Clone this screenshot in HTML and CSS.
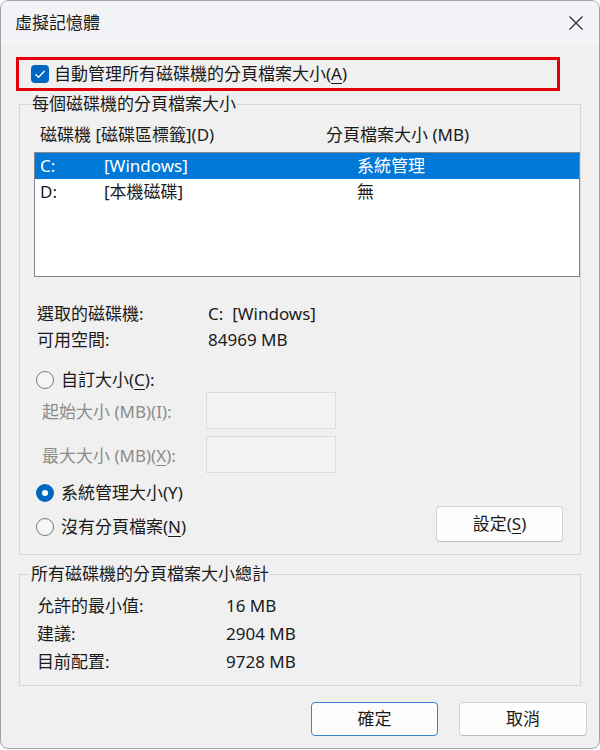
FILE: index.html
```html
<!DOCTYPE html>
<html lang="zh-Hant">
<head>
    <meta charset="utf-8">
    <title>虛擬記憶體</title>
    <link rel="stylesheet" href="styles.css">
</head>
<body>
    <div class="dialog">
        <div class="titlebar">
            <span class="title">虛擬記憶體</span>
            <svg class="close" width="16" height="16" viewBox="0 0 16 16">
                <path d="M1.5 1.5 L14.5 14.5 M14.5 1.5 L1.5 14.5" stroke="#262626" stroke-width="1.1" fill="none"/>
            </svg>
        </div>

        <div class="auto-manage">
            <span class="checkbox">
                <svg width="18" height="18" viewBox="0 0 18 18">
                    <path d="M4.5 9.3 L7.6 12.3 L13.6 6" stroke="#fff" stroke-width="1.4" fill="none"/>
                </svg>
            </span>
            <span>自動管理所有磁碟機的分頁檔案大小(<u>A</u>)</span>
        </div>

        <fieldset class="group drives">
            <legend>每個磁碟機的分頁檔案大小</legend>

            <div class="list-head">
                <span>磁碟機 [磁碟區標籤](D)</span>
                <span>分頁檔案大小 (MB)</span>
            </div>
            <div class="drive-list">
                <div class="drive-row selected">
                    <span>C:</span><span>[Windows]</span><span>系統管理</span>
                </div>
                <div class="drive-row">
                    <span>D:</span><span>[本機磁碟]</span><span>無</span>
                </div>
            </div>

            <div class="info">
                <div class="info-row"><span>選取的磁碟機:</span><span>C:&nbsp;&nbsp;[Windows]</span></div>
                <div class="info-row"><span>可用空間:</span><span>84969 MB</span></div>
            </div>

            <div class="radio-row custom"><span class="radio"></span><span>自訂大小(<u>C</u>):</span></div>
            <div class="size-row">
                <span class="size-label">起始大小 (MB)(I):</span>
                <span class="size-input"></span>
            </div>
            <div class="size-row second">
                <span class="size-label">最大大小 (MB)(<u>X</u>):</span>
                <span class="size-input"></span>
            </div>
            <div class="radio-row system"><span class="radio on"></span><span>系統管理大小(Y)</span></div>
            <div class="last-row">
                <div class="radio-row none"><span class="radio"></span><span>沒有分頁檔案(<u>N</u>)</span></div>
                <button class="btn set">設定(<u>S</u>)</button>
            </div>
        </fieldset>

        <fieldset class="group totals">
            <legend>所有磁碟機的分頁檔案大小總計</legend>
            <div class="total-row"><span>允許的最小值:</span><span>16 MB</span></div>
            <div class="total-row"><span>建議:</span><span>2904 MB</span></div>
            <div class="total-row"><span>目前配置:</span><span>9728 MB</span></div>
        </fieldset>

        <div class="actions">
            <button class="btn default">確定</button>
            <button class="btn">取消</button>
        </div>
    </div>
</body>
</html>
```

FILE: styles.css
```css
body {
    margin: 0;
    background: #ffffff;
    font-family: "Noto Sans", "Noto Sans CJK TC", sans-serif;
    font-size: 17px;
    color: #1b1b1b;
}

u {
    text-decoration-thickness: 1px;
    text-underline-offset: 3px;
}

.dialog {
    width: 600px;
    height: 749px;
    box-sizing: border-box;
    border: 1px solid #a3a3a3;
    border-radius: 8px;
    background: #f0f0f0;
    overflow: hidden;
    display: flex;
    flex-direction: column;
}

/* title bar */
.titlebar {
    height: 44px;
    flex: none;
    display: flex;
    align-items: center;
    justify-content: space-between;
    padding: 0 15px 0 14px;
    background: #f2f3f6;
}

.title {
    line-height: 24px;
}

.close {
    display: block;
}

/* auto manage checkbox, outlined in red */
.auto-manage {
    margin: 12px 0 0 15px;
    width: 544px;
    height: 34px;
    box-sizing: border-box;
    border: 3px solid #e3000b;
    display: flex;
    align-items: center;
    gap: 5px;
    padding-left: 12px;
    line-height: 24px;
}

.checkbox {
    width: 18px;
    height: 18px;
    border-radius: 4px;
    background: #0067c0;
    flex: none;
}

.checkbox svg {
    display: block;
}

/* group boxes */
.group {
    margin: 2px 18px 0 18px;
    padding: 0;
    border: 1px solid #d7d7d7;
    min-inline-size: 0;
}

.group legend {
    margin-left: 11px;
    padding: 0 1px;
    line-height: 22px;
}

.list-head {
    margin-top: 8px;
    height: 24px;
    line-height: 24px;
    display: grid;
    grid-template-columns: 286px 1fr;
    padding-left: 20px;
}

.drive-list {
    margin: 5px 0 0 14px;
    height: 125px;
    box-sizing: border-box;
    border: 1px solid #828790;
    background: #ffffff;
}

.drive-row {
    height: 26px;
    line-height: 26px;
    display: grid;
    grid-template-columns: 64px 253px 1fr;
    padding-left: 5px;
}

.drive-row.selected {
    background: #0078d7;
    color: #ffffff;
}

.info {
    margin-top: 24px;
    padding-left: 17px;
}

.info-row {
    height: 26px;
    line-height: 26px;
    display: grid;
    grid-template-columns: 171px 1fr;
}

/* radio buttons */
.radio-row {
    display: flex;
    align-items: center;
    gap: 7px;
    height: 26px;
    line-height: 26px;
    padding-left: 16px;
}

.radio-row.custom {
    margin-top: 15px;
    height: 24px;
}

.radio-row.system {
    margin-top: 7px;
}

.radio-row.none {
    margin-top: 8px;
}

.radio {
    width: 18px;
    height: 18px;
    box-sizing: border-box;
    border: 1px solid #7a7a7a;
    border-radius: 50%;
    background: #f6f6f6;
    flex: none;
}

.radio.on {
    border: 6px solid #0067c0;
    background: #ffffff;
}

/* disabled custom size fields */
.size-row {
    display: flex;
    align-items: center;
    height: 37px;
    padding-left: 22px;
    color: #8c8c8c;
}

.size-row.second {
    margin-top: 7px;
}

.size-label {
    width: 164px;
}

.size-input {
    width: 130px;
    height: 37px;
    box-sizing: border-box;
    border: 1px solid #dcdcdc;
    background: #f3f3f3;
}

.last-row {
    display: flex;
    align-items: flex-start;
    justify-content: space-between;
    padding: 0 17px 12px 0;
}

/* buttons */
.btn {
    font: inherit;
    color: inherit;
    height: 36px;
    width: 127px;
    padding: 0;
    background: #fdfdfd;
    border: 1px solid #d3d3d3;
    border-bottom-color: #bdbdbd;
    border-radius: 4px;
    line-height: 24px;
}

.btn.default {
    border-color: #3b82cf;
}

.totals {
    margin-top: 8px;
    padding: 0 0 9px 17px;
}

.totals legend {
    margin-left: -7px;
}

.total-row {
    height: 28px;
    line-height: 28px;
    display: grid;
    grid-template-columns: 189px 1fr;
}

.totals legend + .total-row {
    margin-top: 7px;
}

.actions {
    margin-top: 16px;
    display: flex;
    justify-content: flex-end;
    gap: 21px;
    padding-right: 12px;
}

.actions .btn {
    height: 34px;
    width: 127px;
}

.actions .btn + .btn {
    width: 128px;
}
```
